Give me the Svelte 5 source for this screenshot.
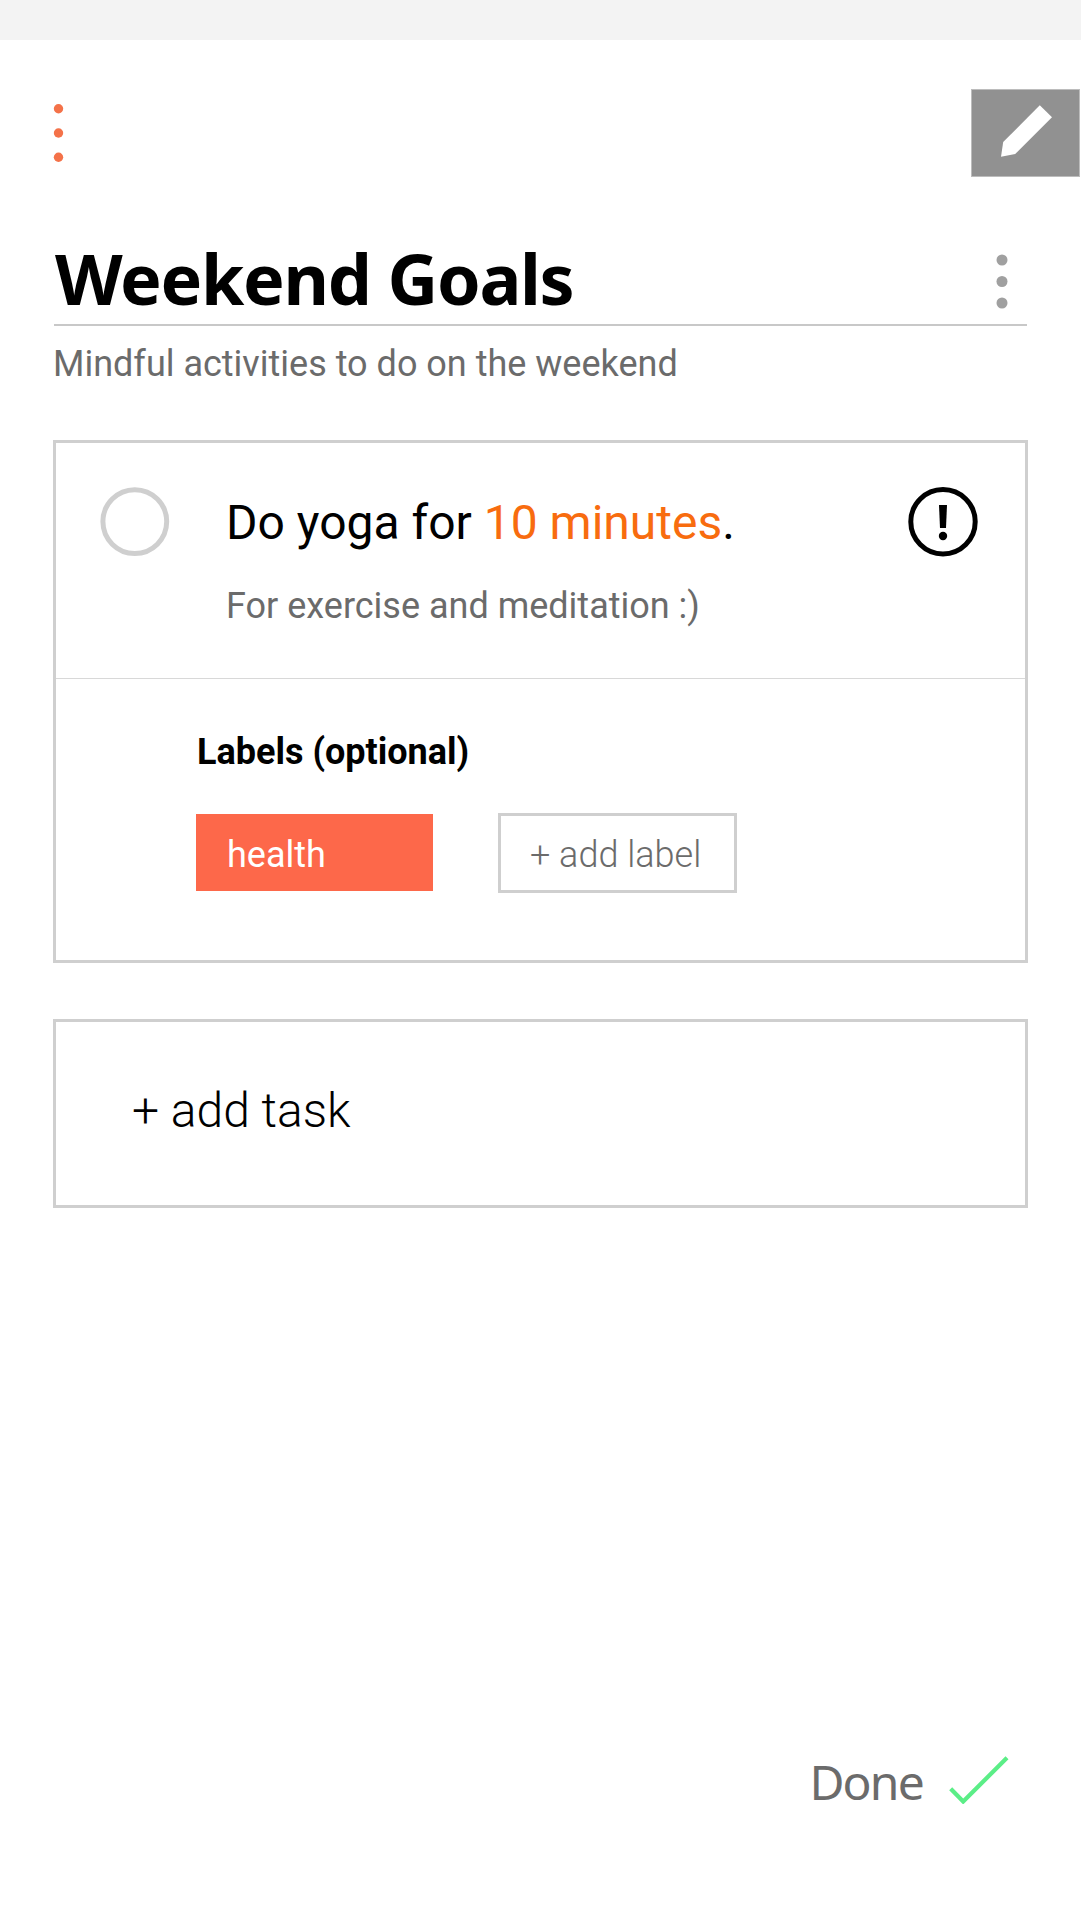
<script>
  const list = { title: 'Weekend Goals', note: 'Mindful activities to do on the weekend' };
  const labels = ['health'];
</script>

<div class="status"></div>

<header class="toolbar">
  <svg class="menu" width="12" height="60" viewBox="0 0 12 60" fill="#f47249">
    <circle cx="5.5" cy="5.7" r="4.7" />
    <circle cx="5.5" cy="30" r="4.7" />
    <circle cx="5.5" cy="54.2" r="4.7" />
  </svg>
  <button class="edit" aria-label="Edit">
    <svg width="107" height="86" viewBox="0 0 107 86" fill="#fff">
      <path d="M67.8 15.3 80 27.2 43.2 64 29 66.8 31.2 52Z" />
    </svg>
  </button>
</header>

<main>
  <div class="heading">
    <h1>{list.title}</h1>
    <svg width="12" height="56" viewBox="0 0 12 56" fill="#a0a0a0">
      <circle cx="6" cy="6" r="5.5" />
      <circle cx="6" cy="27.5" r="5.5" />
      <circle cx="6" cy="49" r="5.5" />
    </svg>
  </div>
  <p class="note">{list.note}</p>

  <section class="card">
    <div class="task">
      <svg class="check" width="70" height="70" viewBox="0 0 70 70" fill="none" stroke="#cfcfcf" stroke-width="5">
        <circle cx="34.8" cy="34.6" r="31.9" />
      </svg>
      <div class="text">
        <p class="name">Do yoga for <span>10 minutes</span>.</p>
        <p class="detail">For exercise and meditation :)</p>
      </div>
      <svg class="alert" width="70" height="70" viewBox="0 0 70 70">
        <circle cx="35" cy="34.8" r="32.2" fill="none" stroke="#000" stroke-width="5" />
        <path d="M31 18h8l-1 23h-6z" />
        <circle cx="35" cy="49" r="4.2" />
      </svg>
    </div>
    <div class="labels">
      <h2>Labels (optional)</h2>
      <div class="chips">
        {#each labels as label}<span class="chip">{label}</span>{/each}
        <button class="chip add">+ add label</button>
      </div>
    </div>
  </section>

  <button class="add-task">+ add task</button>
</main>

<footer>
  <span>Done</span>
  <svg width="60" height="48" viewBox="0 0 60 48" fill="none" stroke="#5bee87" stroke-width="4.2">
    <path d="M1.7 32.7 14.2 45.5 58 1.8" />
  </svg>
</footer>

<style>
  :global(body) { background: #fff; }
  :global(#app) {
    width: 1081px;
    height: 1921px;
    display: flex;
    flex-direction: column;
    overflow: hidden;
    font: 36px/42px Roboto, sans-serif;
    color: #000;
  }
  h1, h2, p { margin: 0; white-space: nowrap; }
  svg { display: block; flex: none; }
  button { font: inherit; border-radius: 0; background: none; padding: 0; text-align: left; }

  .status { height: 40px; background: #f3f3f3; flex: none; }

  .toolbar {
    display: flex;
    justify-content: space-between;
    align-items: center;
    margin-top: 49px;
    padding: 0 1px 0 53px;
  }
  .edit {
    box-sizing: border-box;
    width: 109px;
    height: 88px;
    background: #919191;
    border: 1px solid #bcbcbc;
  }

  main { padding: 52px 53px 0; display: flex; flex-direction: column; }
  .heading {
    display: flex;
    justify-content: space-between;
    height: 95px;
    margin: 0 1px;
    border-bottom: 2px solid #c8c8c8;
  }
  .heading svg { margin: 25px 19px 0 0; }
  h1 {
    padding: 1px 0 0 1px;
    font: 700 70px/96px "Noto Sans", sans-serif;
    letter-spacing: -1.3px;
  }
  .note { margin-top: 17px; color: #6b6b6b; }

  .card { margin-top: 55px; border: 3px solid #cfcfcf; height: 517px; }
  .task {
    display: flex;
    height: 235px;
    border-bottom: 1px solid #d8d8d8;
  }
  .check { margin: 44px 0 0 44px; }
  .text { margin: 51px auto 0 56px; }
  .name { font-size: 48px; line-height: 57px; }
  .name span { color: #f86c0f; }
  .detail { margin-top: 34px; color: #6b6b6b; }
  .alert { margin: 44px 47.5px 0 0; }

  .labels { padding: 52px 0 0 140px; }
  h2 { padding-left: 1px; font-size: 36px; font-weight: 700; line-height: 42px; }
  .chips { display: flex; gap: 65px; margin-top: 40px; }
  .chip {
    box-sizing: border-box;
    width: 237px;
    height: 77px;
    margin-top: 1px;
    padding: 20px 0 0 31px;
    background: #fd684a;
    color: #fff;
  }
  .add {
    width: 239px;
    height: 80px;
    margin-top: 0;
    padding: 3px 0 0 29px;
    background: none;
    border: 3px solid #cfcfcf;
    color: #6b6b6b;
    font-weight: 300;
  }

  .add-task {
    height: 189px;
    margin-top: 56px;
    padding: 0 0 6px 76px;
    border: 3px solid #cfcfcf;
    color: #000;
    font-size: 48px;
    font-weight: 300;
    line-height: 57px;
  }

  footer {
    display: flex;
    justify-content: flex-end;
    align-items: flex-start;
    margin-top: auto;
    padding: 0 72px 107px 0;
    color: #6b6b6b;
  }
  footer span {
    font: 48px/65px "Noto Sans", sans-serif;
    letter-spacing: -1.8px;
    margin-right: 26px;
  }
  footer svg { margin-top: 7px; }
</style>
